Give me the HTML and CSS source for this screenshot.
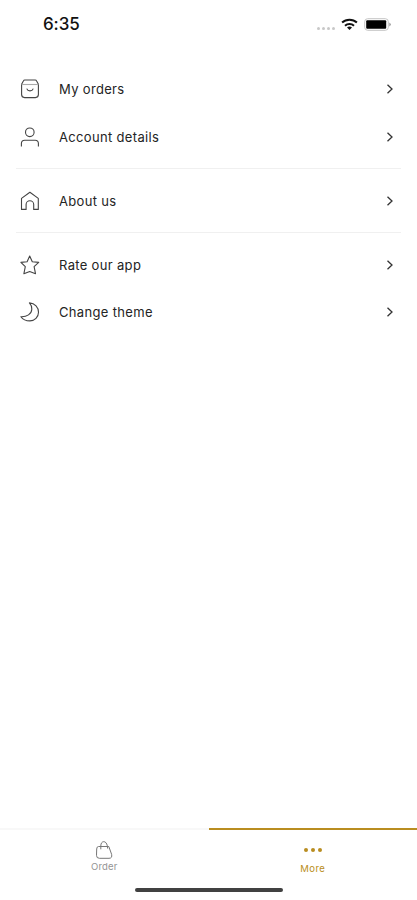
FILE: index.html
```html
<!DOCTYPE html>
<html lang="en">
<head>
<meta charset="utf-8">
<meta name="viewport" content="width=device-width">
<title>More</title>
<link rel="stylesheet" href="styles.css">
</head>
<body>
<div class="screen">
  <header class="status">
    <span class="time">6:35</span>
    <div class="indicators">
      <span class="signal"><i></i><i></i><i></i><i></i></span>
      <svg class="wifi" width="17" height="13" viewBox="0 0 17 13" fill="none" stroke="#111" stroke-width="2"><path d="M1.1 4.5C5.2.7 11.8.7 15.9 4.5M4 7.7C6.5 5.4 10.5 5.4 13 7.7"/><path d="M8.5 12 6 9.5Q8.5 7.6 11 9.5Z" fill="#111" stroke="none"/></svg>
      <svg class="battery" width="28" height="13" viewBox="0 0 28 13"><rect x=".7" y=".7" width="23.6" height="11.6" rx="3" fill="none" stroke="#c4c4c4"/><rect x="2.2" y="2.2" width="20" height="8.6" rx="1" fill="#000"/><path d="M25.3 4.4Q28.3 6.5 25.3 8.6Z" fill="#999"/></svg>
    </div>
  </header>
  <main class="menu">
    <section class="group">
      <a class="row">
        <svg class="icon" viewBox="0 0 20 20"><path d="M1.6 5.2 3.4 1.9Q3.8 1 4.8 1H15.2Q16.2 1 16.6 1.9L18.4 5.2V15.6Q18.4 18.6 15.4 18.6H4.6Q1.6 18.6 1.6 15.6Z"/><path class="faint" d="M1.6 5.5H18.4"/><path d="M6.7 9.6Q7.6 11.9 10 11.9T13.3 9.6"/></svg>
        <span class="label">My orders</span>
        <svg class="chevron" viewBox="0 0 8 12"><path d="m1.5 1.7 4.5 4.3-4.5 4.3"/></svg>
      </a>
      <a class="row">
        <svg class="icon" viewBox="0 0 20 20"><circle cx="9.8" cy="5.3" r="4.3"/><path d="M1.4 19.4V16.6Q1.4 13.3 4.7 13.3H15.1Q18.4 13.3 18.4 16.6V19.4"/></svg>
        <span class="label">Account details</span>
        <svg class="chevron" viewBox="0 0 8 12"><path d="m1.5 1.7 4.5 4.3-4.5 4.3"/></svg>
      </a>
    </section>
    <section class="group">
      <a class="row">
        <svg class="icon" viewBox="0 0 20 20"><path d="M1.5 18.4V7.4L9.9 1.2l8.4 6.2v11H13.7V13.6a3.8 3.8 0 0 0-7.6 0v4.8Z"/></svg>
        <span class="label">About us</span>
        <svg class="chevron" viewBox="0 0 8 12"><path d="m1.5 1.7 4.5 4.3-4.5 4.3"/></svg>
      </a>
    </section>
    <section class="group">
      <a class="row">
        <svg class="icon" viewBox="0 0 20 20"><path d="m9.7 1 2.6 5.8 6.4.6-4.6 4.3 1.4 7L9.7 16.6l-5.8 2.1 1.4-7L.9 7.4l6.2-.6Z"/></svg>
        <span class="label">Rate our app</span>
        <svg class="chevron" viewBox="0 0 8 12"><path d="m1.5 1.7 4.5 4.3-4.5 4.3"/></svg>
      </a>
      <a class="row">
        <svg class="icon" viewBox="0 0 20 20"><path d="M9.4.9C15 1.3 18.5 5.4 18.5 10.2C18.5 15.1 14.7 18.9 9.9 18.9C6.1 18.9 2.6 17.1.9 14.7C6.8 15 11.6 12 11.8 7.2C11.9 4.6 11 2.6 9.4.9Z"/></svg>
        <span class="label">Change theme</span>
        <svg class="chevron" viewBox="0 0 8 12"><path d="m1.5 1.7 4.5 4.3-4.5 4.3"/></svg>
      </a>
    </section>
  </main>
  <nav class="tabs">
    <a class="tab">
      <svg class="bag" width="18" height="20" viewBox="0 0 18 20" fill="none" stroke="#777" stroke-width="1"><path d="M3.5 6.5H13.8L16.6 14.3Q17.5 18.3 14 18.3H4.4Q1.4 18.3 1.5 15.3L1.7 9Q1.8 6.5 3.5 6.5Z"/><path d="M5.8 9.3V6C5.8.2 11.4.3 12.3 5.8L12.7 8.6"/></svg>
      <span class="tab-label">Order</span>
    </a>
    <a class="tab active">
      <span class="dots"><i></i><i></i><i></i></span>
      <span class="tab-label">More</span>
    </a>
  </nav>
  <div class="home"></div>
</div>
</body>
</html>
```
FILE: styles.css
```css
* { box-sizing: border-box; }
body { margin: 0; background: #fff; color: #242424; font-family: Inter, "Liberation Sans", sans-serif; }
.screen { height: 900px; display: flex; flex-direction: column; overflow: hidden; }
.status { height: 48px; flex: none; padding: 0 25px 0 43px; display: flex; justify-content: space-between; align-items: center; }
.time { font-size: 17px; font-weight: 450; letter-spacing: -0.1px; color: #111; }
.indicators { display: flex; align-items: center; }
.signal { display: flex; gap: 2px; padding-top: 9px; margin-right: 6px; }
.signal i { width: 3px; height: 3px; border-radius: 50%; background: #c8c8c8; }
.wifi { margin-right: 6px; }
.menu { flex: 1; padding: 17px 16px 0; }
.group + .group { border-top: 1px solid #f0f0f0; margin-top: 8px; padding-top: 8px; }
.group:last-child { margin-top: 7px; }
.row { height: 48px; display: flex; align-items: center; padding: 0 8px 0 4px; }
.row + .row { height: 47px; }
.group:last-child .row + .row { height: 46px; }
.icon { width: 20px; height: 20px; flex: none; margin-right: 19px; fill: none; stroke: #444; stroke-width: 1.1; stroke-linejoin: round; }
.faint { stroke: #aaa; }
.label { flex: 1; font-size: 13px; line-height: 18px; letter-spacing: 0.33px; }
.chevron { width: 8px; height: 12px; margin-right: -1px; fill: none; stroke: #333; stroke-width: 1.3; }
.tabs { height: 59px; flex: none; display: flex; }
.tab { flex: 1; display: flex; flex-direction: column; align-items: center; border-top: 2px solid #f8f8f8; color: #949494; padding-top: 10px; }
.tab.active { color: #b98d20; border-color: #b98d20; padding-top: 18px; }
.bag { flex: none; }
.tab-label { font-size: 9.5px; line-height: 12px; letter-spacing: 0.2px; }
.bag + .tab-label { margin-top: 1px; }
.dots { display: flex; gap: 3px; }
.dots i { width: 4px; height: 4px; border-radius: 50%; background: #b98d20; }
.dots + .tab-label { margin-top: 11px; letter-spacing: 0.5px; }
.home { width: 148px; height: 4px; flex: none; margin: 1px auto 8px; border-radius: 2px; background: #414141; }
```
